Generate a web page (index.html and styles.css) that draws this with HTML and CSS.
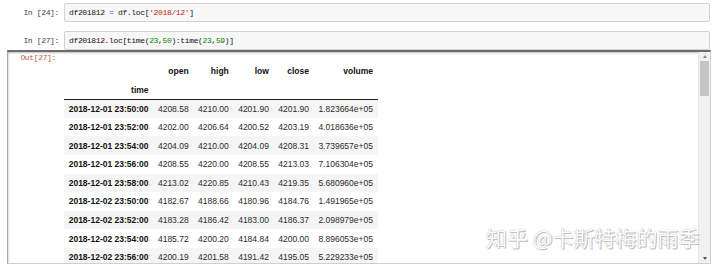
FILE: index.html
```html
<!DOCTYPE html>
<html>
<head>
<meta charset="utf-8">
<link rel="stylesheet" href="styles.css">
</head>
<body>
<div class="nb">
  <div class="cell">
    <div class="prompt in">In&nbsp;[24]:</div>
    <div class="input">df201812 <span class="op">=</span> df.loc[<span class="str">'2018/12'</span>]</div>
  </div>
  <div class="cell cell2">
    <div class="prompt in">In&nbsp;[27]:</div>
    <div class="input">df201812.loc[time(<span class="num">23</span>,<span class="num">50</span>):time(<span class="num">23</span>,<span class="num">59</span>)]</div>
  </div>
  <div class="output">
    <div class="out-main">
      <div class="prompt out">Out[27]:</div>
      <div class="table-wrap">
        <table class="df">
          <thead>
            <tr><th></th><th>open</th><th>high</th><th>low</th><th>close</th><th>volume</th></tr>
            <tr class="hr2"><th>time</th><th></th><th></th><th></th><th></th><th></th></tr>
          </thead>
          <tbody>
            <tr><th>2018-12-01 23:50:00</th><td>4208.58</td><td>4210.00</td><td>4201.90</td><td>4201.90</td><td>1.823664e+05</td></tr>
            <tr><th>2018-12-01 23:52:00</th><td>4202.00</td><td>4206.64</td><td>4200.52</td><td>4203.19</td><td>4.018636e+05</td></tr>
            <tr><th>2018-12-01 23:54:00</th><td>4204.09</td><td>4210.00</td><td>4204.09</td><td>4208.31</td><td>3.739657e+05</td></tr>
            <tr><th>2018-12-01 23:56:00</th><td>4208.55</td><td>4220.00</td><td>4208.55</td><td>4213.03</td><td>7.106304e+05</td></tr>
            <tr><th>2018-12-01 23:58:00</th><td>4213.02</td><td>4220.85</td><td>4210.43</td><td>4219.35</td><td>5.680960e+05</td></tr>
            <tr><th>2018-12-02 23:50:00</th><td>4182.67</td><td>4188.66</td><td>4180.96</td><td>4184.76</td><td>1.491965e+05</td></tr>
            <tr><th>2018-12-02 23:52:00</th><td>4183.28</td><td>4186.42</td><td>4183.00</td><td>4186.37</td><td>2.098979e+05</td></tr>
            <tr><th>2018-12-02 23:54:00</th><td>4185.72</td><td>4200.20</td><td>4184.84</td><td>4200.00</td><td>8.896053e+05</td></tr>
            <tr><th>2018-12-02 23:56:00</th><td>4200.19</td><td>4201.58</td><td>4191.42</td><td>4195.05</td><td>5.229233e+05</td></tr>
          </tbody>
        </table>
      </div>
    </div>
    <div class="scrollbar">
      <div class="arrow up"></div>
      <div class="track"><div class="thumb"></div></div>
      <div class="arrow down"></div>
    </div>
    <div class="watermark">知乎 @卡斯特梅的雨季</div>
  </div>
</div>
</body>
</html>
```
FILE: styles.css
```css
html, body {
  margin: 0;
  padding: 0;
  background: #ffffff;
}

.nb {
  padding-top: 3px;
}

.cell {
  display: flex;
  align-items: center;
  margin-right: 10px;
}

.cell2 {
  margin-top: 9px;
}

.prompt {
  font-family: "Liberation Mono", "DejaVu Sans Mono", monospace;
  font-size: 8px;
  letter-spacing: -0.35px;
  text-align: right;
  box-sizing: border-box;
  flex: none;
  white-space: nowrap;
}

.prompt.in {
  width: 64px;
  padding-right: 5px;
  color: #3a3d5c;
}

.input {
  flex: 1;
  height: 19px;
  box-sizing: border-box;
  border: 1px solid #d2d2d2;
  border-radius: 2px;
  background: #f7f7f7;
  padding-left: 4px;
  line-height: 17px;
  font-family: "Liberation Mono", "DejaVu Sans Mono", monospace;
  font-size: 8px;
  letter-spacing: -0.35px;
  color: #111;
  white-space: nowrap;
}

.op { color: #aa22ff; }
.str { color: #ba2121; }
.num { color: #008800; }

.output {
  position: relative;
  display: flex;
  margin-left: 7px;
  margin-right: 9px;
  height: 214px;
  box-sizing: border-box;
  border-top: 2px solid #6d6d6d;
  border-left: 1px solid #a8a8a8;
  border-right: 1px solid #cfcfcf;
  border-bottom: 1px solid #cfcfcf;
  box-shadow: inset 0 2px 2px -1px rgba(0,0,0,0.25), inset 2px 0 2px -1px rgba(0,0,0,0.12);
  overflow: hidden;
}

.out-main {
  flex: 1;
  display: flex;
  overflow: hidden;
}

.prompt.out {
  width: 56px;
  padding-right: 8px;
  line-height: 12px;
  color: #b5603f;
}

.table-wrap {
  padding-top: 10px;
}

.df {
  border-collapse: collapse;
  font-family: "Liberation Sans", Arial, sans-serif;
  font-size: 8.5px;
  color: #2a2a2a;
}

.df tr {
  height: 18.6px;
}

.df th, .df td {
  padding: 0 4.7px;
  text-align: right;
  white-space: nowrap;
  vertical-align: middle;
}

.df th {
  font-weight: bold;
  color: #111;
}

.df thead tr.hr2 th {
  border-bottom: 1px solid #222;
}

.df tbody tr:nth-child(odd) {
  background: #f5f5f5;
}

.scrollbar {
  flex: none;
  width: 12px;
  display: flex;
  flex-direction: column;
  background: #f1f1f1;
  border-left: 1px solid #e6e6e6;
  box-sizing: border-box;
}

.arrow {
  height: 9px;
  display: flex;
  align-items: center;
  justify-content: center;
  flex: none;
}

.arrow.up::before {
  content: "";
  border-left: 2.5px solid transparent;
  border-right: 2.5px solid transparent;
  border-bottom: 3px solid #8a8a8a;
}

.arrow.down::before {
  content: "";
  border-left: 2.5px solid transparent;
  border-right: 2.5px solid transparent;
  border-top: 3px solid #505050;
}

.track {
  flex: 1;
  display: flex;
  justify-content: center;
}

.thumb {
  width: 9px;
  height: 35px;
  background: #c4c4c4;
}

.watermark {
  position: absolute;
  left: 478px;
  top: 175px;
  font-family: "Noto Sans CJK SC", "Noto Sans", sans-serif;
  font-size: 21px;
  line-height: 21px;
  color: #ffffff;
  text-shadow: 0 0 1px #9a9a9a, 1px 1px 0 #c4c4c4;
  white-space: nowrap;
  pointer-events: none;
}
```
